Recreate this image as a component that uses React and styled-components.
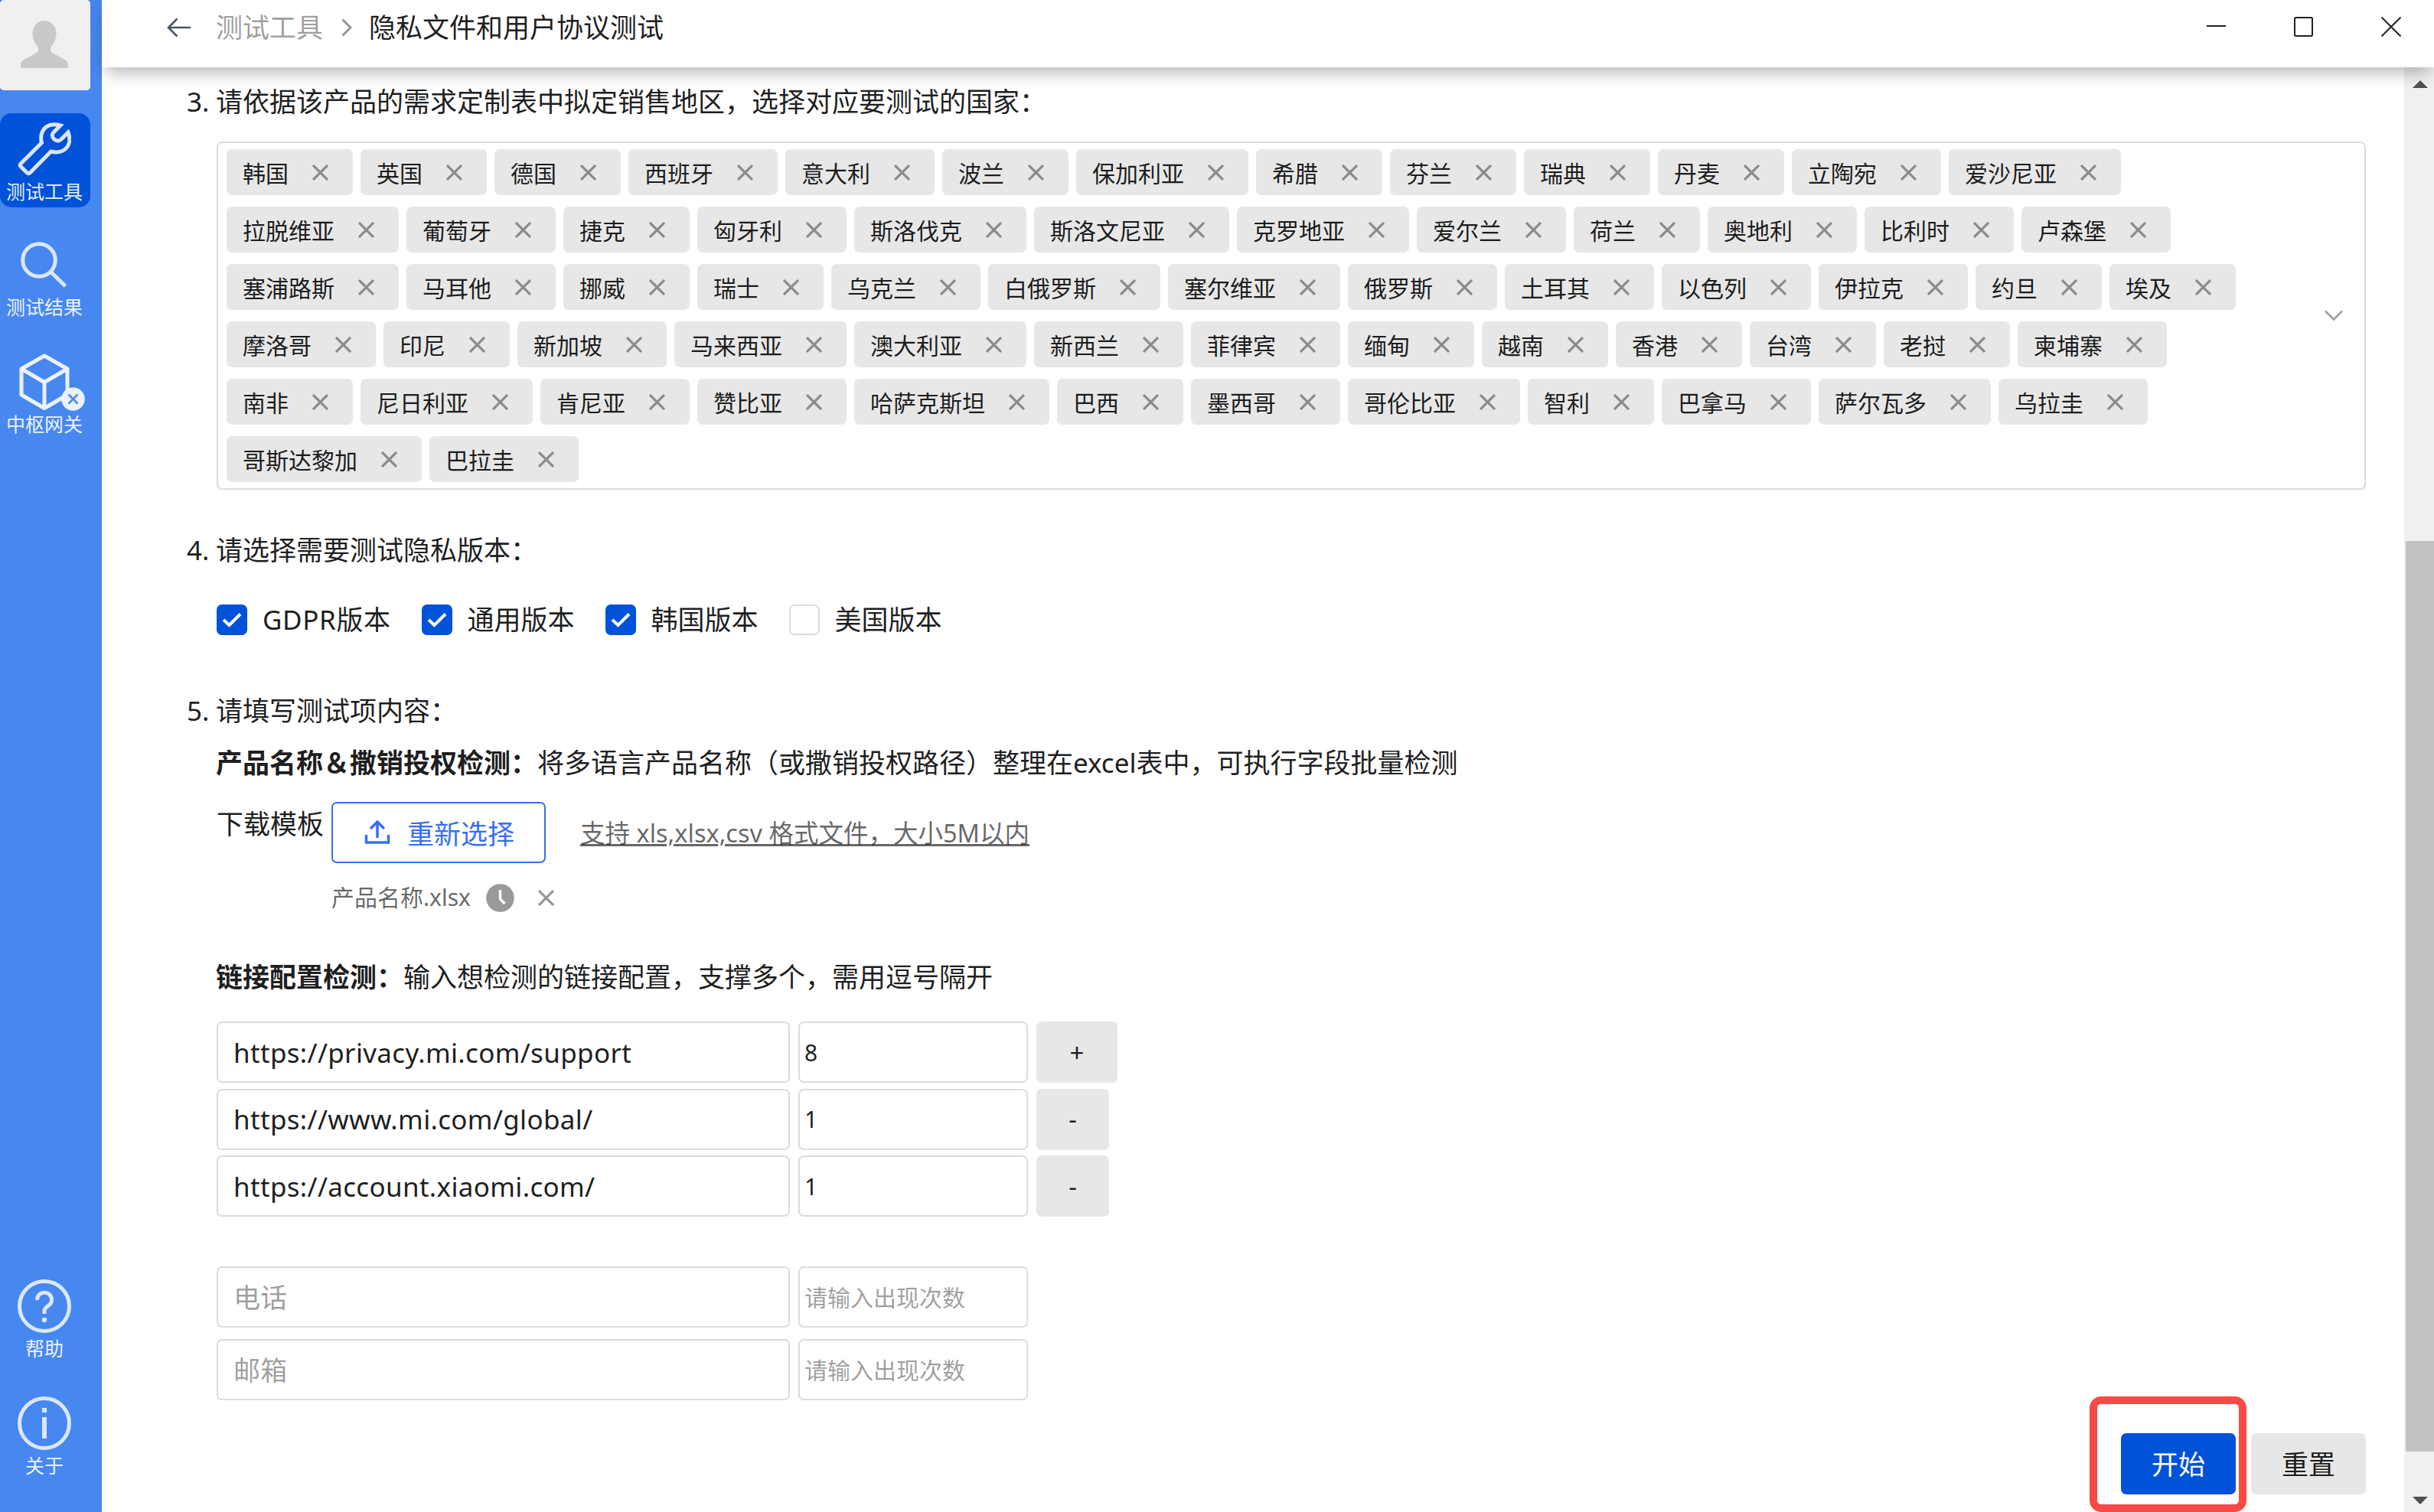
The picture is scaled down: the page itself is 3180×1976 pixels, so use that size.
import React, { useState } from 'react';
import styled, { createGlobalStyle } from 'styled-components';

const initialCountries = [
  '韩国', '英国', '德国', '西班牙', '意大利', '波兰', '保加利亚', '希腊', '芬兰', '瑞典', '丹麦', '立陶宛', '爱沙尼亚',
  '拉脱维亚', '葡萄牙', '捷克', '匈牙利', '斯洛伐克', '斯洛文尼亚', '克罗地亚', '爱尔兰', '荷兰', '奥地利', '比利时', '卢森堡',
  '塞浦路斯', '马耳他', '挪威', '瑞士', '乌克兰', '白俄罗斯', '塞尔维亚', '俄罗斯', '土耳其', '以色列', '伊拉克', '约旦', '埃及',
  '摩洛哥', '印尼', '新加坡', '马来西亚', '澳大利亚', '新西兰', '菲律宾', '缅甸', '越南', '香港', '台湾', '老挝', '柬埔寨',
  '南非', '尼日利亚', '肯尼亚', '赞比亚', '哈萨克斯坦', '巴西', '墨西哥', '哥伦比亚', '智利', '巴拿马', '萨尔瓦多', '乌拉圭',
  '哥斯达黎加', '巴拉圭',
];

const initialVersions = [
  { label: 'GDPR版本', checked: true },
  { label: '通用版本', checked: true },
  { label: '韩国版本', checked: true },
  { label: '美国版本', checked: false },
];

const initialLinks = [
  { url: 'https://privacy.mi.com/support', count: '8' },
  { url: 'https://www.mi.com/global/', count: '1' },
  { url: 'https://account.xiaomi.com/', count: '1' },
];

const CrossIcon = ({ size = 21, color = '#8b8b8b', width = 3.2 }) => (
  <svg width={size} height={size} viewBox="0 0 21 21" fill="none" stroke={color} strokeWidth={width}>
    <path d="M1 1l19 19M20 1L1 20" />
  </svg>
);

const WrenchIcon = () => (
  <svg width="70" height="70" viewBox="0 0 70 70" fill="none" stroke="#dae6fb" strokeWidth="5">
    <path d="M56 4C45 .5 35.500 4 32 13c-2 5-2 8-.5 13.500L4.500 53.500c-1.500 1.500-1.500 3 0 4.500l7.500 7.500c1.500 1.500 3 1.500 4.500 0L43.500 38C56 41 65 36 67.500 26c1-5 .5-8-1.500-13L56.500 22.500c-5.500 5-15-4-9.500-9.500z" />
  </svg>
);

const SearchIcon = () => (
  <svg width="60" height="60" viewBox="0 0 60 60" fill="none" stroke="#dbe7fd" strokeWidth="5">
    <circle cx="24" cy="24" r="21.300" />
    <path d="M39 39l19.500 19" />
  </svg>
);

const GatewayIcon = () => (
  <svg width="86" height="75" viewBox="0 0 86 75" fill="none">
    <path d="M33 3l30 17v34L33 71.500 3 54V20zM3 20l30 17.500L63 20M33 37.500v34" stroke="#ebf2fe" strokeWidth="5" strokeLinejoin="round" />
    <circle cx="70.500" cy="59.500" r="15.300" fill="#ebf2fe" />
    <path d="M64.500 53.500l12 12m0-12l-12 12" stroke="#4787f0" strokeWidth="2.500" />
  </svg>
);

const HelpIcon = () => (
  <svg width="70" height="70" viewBox="0 0 70 70" fill="none" stroke="#dbe7fd" strokeWidth="5">
    <circle cx="35" cy="35" r="32.500" />
    <path d="M25.500 27c0-13 19-13 19 0 0 9-9.500 7-9.500 14v4" />
    <circle cx="35" cy="53" r="3.200" fill="#dbe7fd" stroke="none" />
  </svg>
);

const AboutIcon = () => (
  <svg width="70" height="70" viewBox="0 0 70 70" fill="none" stroke="#dbe7fd" strokeWidth="5">
    <circle cx="35" cy="35" r="32.500" />
    <path d="M35 27v28M32 18h6" strokeWidth="6" />
  </svg>
);

export default function App() {
  const [countries, setCountries] = useState(initialCountries);
  const [versions, setVersions] = useState(initialVersions);
  const [links, setLinks] = useState(initialLinks);

  const removeCountry = (name) => setCountries(countries.filter((item) => item !== name));

  const toggleVersion = (label) => {
    setVersions(versions.map((v) => (v.label === label ? { ...v, checked: !v.checked } : v)));
  };

  const updateLink = (index, key, value) => {
    setLinks(links.map((link, i) => (i === index ? { ...link, [key]: value } : link)));
  };

  const handleLinkButton = (index) => {
    if (index === 0) {
      setLinks([...links, { url: '', count: '' }]);
    } else {
      setLinks(links.filter((_, i) => i !== index));
    }
  };

  return (
    <>
      <GlobalStyle />
      <Window>
        <Sidebar>
          <Avatar>
            <svg width="64" height="64" viewBox="0 0 64 64" fill="#c9c9c9">
              <path d="M32 1c9 0 15.500 7 15.500 17 0 7-3 12-6.500 17-2 4-1 7 3 9l14 7.500c4 2.500 5 4 5 7V61c0 1.500-.5 2-2 2H3c-1.500 0-2-.5-2-2v-2.500c0-3 1-4.500 5-7L20 44c4-2 5-5 3-9-3.500-5-6.500-10-6.500-17C16.500 8 23 1 32 1z" />
            </svg>
          </Avatar>
          <NavItem $active>
            <NavIcon><WrenchIcon /></NavIcon>
            <NavLabel>测试工具</NavLabel>
          </NavItem>
          <NavItem>
            <NavIcon $left="27px"><SearchIcon /></NavIcon>
            <NavLabel>测试结果</NavLabel>
          </NavItem>
          <NavItem>
            <NavIcon $left="25px"><GatewayIcon /></NavIcon>
            <NavLabel>中枢网关</NavLabel>
          </NavItem>
          <NavBottom>
            <NavItem>
              <NavIcon><HelpIcon /></NavIcon>
              <NavLabel>帮助</NavLabel>
            </NavItem>
            <NavItem>
              <NavIcon><AboutIcon /></NavIcon>
              <NavLabel>关于</NavLabel>
            </NavItem>
          </NavBottom>
        </Sidebar>

        <Main>
          <Header>
            <Breadcrumb>
              <svg width="31" height="26" viewBox="0 0 31 26" fill="none" stroke="#44566c" strokeWidth="2.600">
                <path d="M13.500 1.500L2 13l11.500 11.500M2 13h29" />
              </svg>
              <CrumbLink>测试工具</CrumbLink>
              <svg width="14" height="24" viewBox="0 0 14 24" fill="none" stroke="#959595" strokeWidth="3">
                <path d="M1.500 1.500L12 12 1.500 22.500" />
              </svg>
              <CrumbCurrent>隐私文件和用户协议测试</CrumbCurrent>
            </Breadcrumb>
            <WindowControls>
              <svg width="26" height="26" viewBox="0 0 26 26" stroke="#222" strokeWidth="2">
                <path d="M0 12h25" />
              </svg>
              <svg width="26" height="26" viewBox="0 0 26 26" fill="none" stroke="#222" strokeWidth="2">
                <rect x="1" y="1" width="23" height="24" rx="1.500" />
              </svg>
              <svg width="26" height="26" viewBox="0 0 26 26" stroke="#222" strokeWidth="2">
                <path d="M.5.500l25 25M25.500.500l-25 25" />
              </svg>
            </WindowControls>
          </Header>

          <Body>
            <Content>
              <Question>
                <Number>3.</Number>
                请依据该产品的需求定制表中拟定销售地区，选择对应要测试的国家：
              </Question>
              <CountrySelect>
                <TagList>
                  {countries.map((name) => (
                    <Tag key={name}>
                      {name}
                      <IconButton onClick={() => removeCountry(name)}><CrossIcon /></IconButton>
                    </Tag>
                  ))}
                </TagList>
                <svg width="24" height="15" viewBox="0 0 24 15" fill="none" stroke="#a3a3a3" strokeWidth="2.800">
                  <path d="M1 1.500l11 11 11-11" />
                </svg>
              </CountrySelect>

              <Question $top="54px">
                <Number>4.</Number>
                请选择需要测试隐私版本：
              </Question>
              <CheckboxGroup>
                {versions.map(({ label, checked }) => (
                  <CheckboxLabel key={label} onClick={() => toggleVersion(label)}>
                    <CheckboxBox $checked={checked}>
                      {checked && (
                        <svg width="26" height="20" viewBox="0 0 26 20" fill="none" stroke="#fff" strokeWidth="4">
                          <path d="M2 10l7.500 7L24 2.500" />
                        </svg>
                      )}
                    </CheckboxBox>
                    {label}
                  </CheckboxLabel>
                ))}
              </CheckboxGroup>

              <Question $top="74px">
                <Number>5.</Number>
                请填写测试项内容：
              </Question>
              <SubTitle $top="18px">
                <strong>产品名称＆撒销投权检测：</strong>
                将多语言产品名称（或撒销投权路径）整理在excel表中，可执行字段批量检测
              </SubTitle>

              <UploadRow>
                <TemplateLink>下载模板</TemplateLink>
                <div>
                  <UploadLine>
                    <UploadButton>
                      <svg width="34" height="33" viewBox="0 0 34 33" fill="none" stroke="#366ef4" strokeWidth="3.500">
                        <path d="M2.500 20v10h29V20M17 24V4M8 12l9-9 9 9" />
                      </svg>
                      重新选择
                    </UploadButton>
                    <UploadTip>支持 xls,xlsx,csv 格式文件，大小5M以内</UploadTip>
                  </UploadLine>
                  <FileLine>
                    产品名称.xlsx
                    <svg width="37" height="37" viewBox="0 0 37 37" fill="none">
                      <circle cx="18.500" cy="18.500" r="18.300" fill="#999" />
                      <path d="M18.500 8v12l6 6" stroke="#fff" strokeWidth="3.500" />
                    </svg>
                    <IconButton><CrossIcon color="#969696" /></IconButton>
                  </FileLine>
                </div>
              </UploadRow>

              <SubTitle $top="57px">
                <strong>链接配置检测：</strong>
                输入想检测的链接配置，支撑多个，需用逗号隔开
              </SubTitle>
              <LinkList>
                {links.map((link, index) => (
                  <InputRow key={index}>
                    <UrlInput value={link.url} onChange={(e) => updateLink(index, 'url', e.target.value)} />
                    <CountInput value={link.count} onChange={(e) => updateLink(index, 'count', e.target.value)} />
                    <RowButton $wide={index === 0} onClick={() => handleLinkButton(index)}>
                      {index === 0 ? '+' : '-'}
                    </RowButton>
                  </InputRow>
                ))}
              </LinkList>
              <ContactList>
                <InputRow>
                  <UrlInput placeholder="电话" />
                  <CountInput placeholder="请输入出现次数" />
                </InputRow>
                <InputRow>
                  <UrlInput placeholder="邮箱" />
                  <CountInput placeholder="请输入出现次数" />
                </InputRow>
              </ContactList>

              <Footer>
                <Highlighted>
                  <ActionButton $primary>开始</ActionButton>
                </Highlighted>
                <ActionButton>重置</ActionButton>
              </Footer>
            </Content>

            <Scrollbar>
              <ScrollArrow $up />
              <ScrollThumb />
              <ScrollArrow />
            </Scrollbar>
          </Body>
        </Main>
      </Window>
    </>
  );
}

const GlobalStyle = createGlobalStyle`
  *, *::before, *::after {
    box-sizing: border-box;
  }

  body {
    margin: 0;
    overflow: hidden;
    background: #fff;
  }

  body, input, button {
    font-family: "Noto Sans", "Noto Sans CJK SC", sans-serif;
    color: rgba(0, 0, 0, 0.9);
  }

  svg {
    display: block;
    flex-shrink: 0;
  }
`;

const Window = styled.div`
  display: flex;
  width: 3180px;
  height: 1976px;
  overflow: hidden;
`;

const Sidebar = styled.nav`
  display: flex;
  flex-direction: column;
  width: 133px;
  height: 100%;
  background: #4787f0;
`;

const Avatar = styled.div`
  display: flex;
  justify-content: center;
  align-items: flex-start;
  width: 118px;
  height: 118px;
  margin-bottom: 30px;
  padding: 26px 2px 0 0;
  border-radius: 5px;
  background: #f0f0f0;
`;

const NavItem = styled.div`
  display: flex;
  flex-direction: column;
  align-items: center;
  width: 118px;
  height: 123px;
  margin-bottom: 30px;
  padding: ${({ $active }) => ($active ? '10px' : '8px')} 2px 0 0;
  border-radius: 15px;
  background: ${({ $active }) => ($active ? '#0052d9' : 'transparent')};
  cursor: pointer;
`;

const NavIcon = styled.div`
  display: flex;
  align-items: center;
  align-self: ${({ $left }) => ($left ? 'flex-start' : 'center')};
  height: 74px;
  margin-left: ${({ $left }) => $left || 0};
`;

const NavLabel = styled.span`
  font-size: 25px;
  line-height: 36px;
  color: rgba(255, 255, 255, 0.92);
  white-space: nowrap;
`;

const NavBottom = styled.div`
  margin-top: auto;
  margin-bottom: 8px;
`;

const Main = styled.main`
  display: flex;
  flex-direction: column;
  flex: 1;
`;

const Header = styled.header`
  position: relative;
  z-index: 2;
  display: flex;
  justify-content: space-between;
  height: 88px;
  padding: 12px 43px 0 85px;
  background: #fff;
  box-shadow: 0 10px 22px -5px rgba(0, 0, 0, 0.33);
`;

const Breadcrumb = styled.div`
  display: flex;
  align-items: center;
  height: 48px;
  font-size: 35px;
  line-height: 48px;
`;

const CrumbLink = styled.span`
  margin: 0 24px 0 33px;
  color: rgba(0, 0, 0, 0.4);
`;

const CrumbCurrent = styled.span`
  margin-left: 22px;
`;

const WindowControls = styled.div`
  display: flex;
  align-items: flex-start;
  gap: 88px;
  padding-top: 10px;
`;

const Body = styled.div`
  display: flex;
  flex: 1;
`;

const Content = styled.div`
  display: flex;
  flex-direction: column;
  flex: 1;
  padding: 20px 50px 23px 150px;
`;

const Question = styled.div`
  display: flex;
  height: 50px;
  margin-top: ${({ $top }) => $top || 0};
  margin-left: -41px;
  font-size: 35px;
  line-height: 50px;
`;

const Number = styled.span`
  width: 40px;
  padding-left: 2px;
`;

const CountrySelect = styled.div`
  display: flex;
  justify-content: space-between;
  align-items: center;
  margin-top: 27px;
  padding: 8px 28px 8px 11px;
  border: 2px solid #dcdcdc;
  border-radius: 7px;
`;

const TagList = styled.div`
  display: flex;
  flex-wrap: wrap;
  gap: 15px 10px;
  width: 2670px;
`;

const Tag = styled.div`
  display: flex;
  align-items: center;
  gap: 31px;
  height: 60px;
  padding: 0 32px 0 21px;
  border-radius: 7px;
  background: #e7e7e7;
  font-size: 30px;
  white-space: nowrap;
`;

const IconButton = styled.button`
  padding: 0;
  border: none;
  background: none;
  cursor: pointer;
`;

const CheckboxGroup = styled.div`
  display: flex;
  gap: 40px;
  height: 40px;
  margin-top: 46px;
`;

const CheckboxLabel = styled.div`
  display: flex;
  align-items: center;
  gap: 20px;
  font-size: 35px;
  line-height: 40px;
  cursor: pointer;

  &:first-child {
    letter-spacing: 0.6px;
  }
`;

const CheckboxBox = styled.span`
  display: flex;
  justify-content: center;
  align-items: center;
  width: 40px;
  height: 40px;
  border: 2px solid ${({ $checked }) => ($checked ? '#0052d9' : '#dcdcdc')};
  border-radius: 7px;
  background: ${({ $checked }) => ($checked ? '#0052d9' : '#fff')};
`;

const SubTitle = styled.div`
  height: 50px;
  margin-top: ${({ $top }) => $top};
  margin-left: -1px;
  font-size: 35px;
  line-height: 50px;
`;

const UploadRow = styled.div`
  display: flex;
  gap: 10px;
  margin-top: 26px;
`;

const TemplateLink = styled.span`
  padding-top: 4px;
  font-size: 35px;
  line-height: 50px;
`;

const UploadLine = styled.div`
  display: flex;
  align-items: center;
  gap: 45px;
`;

const UploadButton = styled.button`
  display: flex;
  align-items: center;
  gap: 22px;
  width: 280px;
  height: 80px;
  padding: 0 0 2px 41px;
  border: 2px solid #366ef4;
  border-radius: 7px;
  background: #fff;
  color: #366ef4;
  font-size: 35px;
  cursor: pointer;
`;

const UploadTip = styled.span`
  padding-bottom: 3px;
  font-size: 32.5px;
  color: rgba(0, 0, 0, 0.6);
  text-decoration: underline;
  text-decoration-thickness: 3px;
`;

const FileLine = styled.div`
  display: flex;
  align-items: center;
  height: 44px;
  margin-top: 23px;
  font-size: 30px;
  line-height: 44px;
  color: rgba(0, 0, 0, 0.6);

  svg {
    margin-left: 20px;
  }

  button svg {
    margin-left: 31px;
  }
`;

const LinkList = styled.div`
  display: flex;
  flex-direction: column;
  gap: 7.5px;
  margin-top: 33px;
`;

const ContactList = styled.div`
  display: flex;
  flex-direction: column;
  gap: 15px;
  margin-top: 65px;
`;

const InputRow = styled.div`
  display: flex;
  gap: 11px;
  height: 80px;
`;

const TextInput = styled.input`
  height: 80px;
  border: 2px solid #dcdcdc;
  border-radius: 7px;
  outline: none;
  background: #fff;

  &::placeholder {
    color: rgba(0, 0, 0, 0.4);
  }
`;

const UrlInput = styled(TextInput)`
  width: 749px;
  padding: 0 20px;
  font-size: 35px;
  letter-spacing: 0.33px;
`;

const CountInput = styled(TextInput)`
  width: 300px;
  padding: 0 6px;
  font-size: 30px;
`;

const RowButton = styled.button`
  width: ${({ $wide }) => ($wide ? '106px' : '95px')};
  height: 80px;
  padding: 0;
  border: none;
  border-radius: 7px;
  background: #e7e7e7;
  font-size: 33px;
  cursor: pointer;
`;

const Footer = styled.div`
  display: flex;
  justify-content: flex-end;
  gap: 20px;
  margin-top: auto;
`;

const Highlighted = styled.div`
  position: relative;

  &::after {
    content: '';
    position: absolute;
    top: -48px;
    left: -41px;
    width: 205px;
    height: 151px;
    border: 10px solid #f74a46;
    border-radius: 15px;
    pointer-events: none;
  }
`;

const ActionButton = styled.button`
  width: 150px;
  height: 80px;
  padding: 0 0 3px;
  border: none;
  border-radius: 7px;
  background: ${({ $primary }) => ($primary ? '#0052d9' : '#e7e7e7')};
  color: ${({ $primary }) => ($primary ? '#fff' : 'rgba(0, 0, 0, 0.9)')};
  font-size: 35px;
  cursor: pointer;
`;

const Scrollbar = styled.div`
  display: flex;
  flex-direction: column;
  align-items: center;
  width: 39px;
  padding: 17px 0 10px;
  background: #f0f0f0;
`;

const ScrollArrow = styled.span`
  width: 0;
  height: 0;
  margin-left: 3px;
  border-left: 10px solid transparent;
  border-right: 10px solid transparent;
  ${({ $up }) => ($up ? 'border-bottom: 10px solid #505050;' : 'border-top: 10px solid #505050;')}
`;

const ScrollThumb = styled.div`
  align-self: flex-end;
  width: 37px;
  height: 1190px;
  margin: auto 0 59px;
  background: #c1c1c1;
`;
